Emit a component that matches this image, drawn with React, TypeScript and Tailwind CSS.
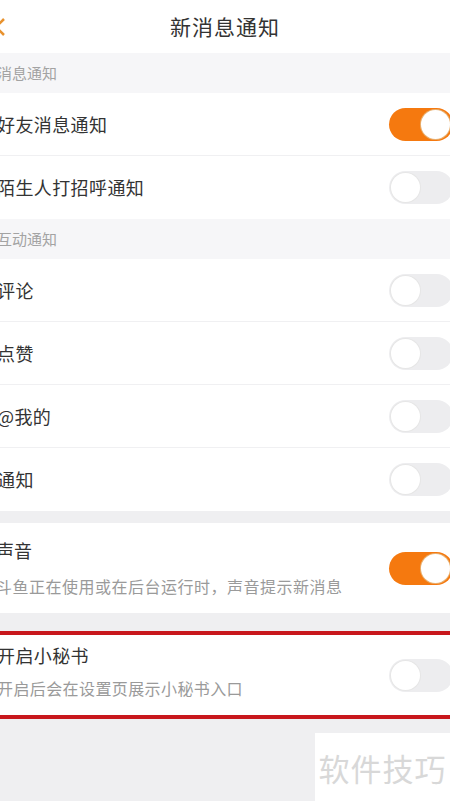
const font = { fontFamily: '"Noto Sans CJK SC", "Noto Sans", sans-serif' };

const Toggle = ({ on }: { on?: boolean }) => (
    <div
        className={`relative w-[64px] h-[33px] rounded-full shrink-0 -mr-[3px] ${on ? "bg-[#f5790f]" : "bg-[#ededef]"}`}
    >
        <div
            className={`absolute top-[2px] w-[29px] h-[29px] rounded-full bg-white ${on ? "right-[3px] shadow-[0_0_0_1px_#e8b070]" : "left-[2px] shadow-[0_0_0_1px_#e6e6e6]"}`}
        />
    </div>
);

const Section = ({ title }: { title: string }) => (
    <div className="h-[40px] bg-[#f6f6f8] flex items-center">
        <span className="-ml-[3px] text-[15px] text-[#a3a3a3]">{title}</span>
    </div>
);

const Row = ({ label, on, last }: { label: string; on?: boolean; last?: boolean }) => (
    <div className={`h-[63px] bg-white flex items-center justify-between ${last ? "" : "border-b border-[#f0f0f2]"}`}>
        <span className="-ml-[3px] text-[18px] text-[#333] tracking-[0.4px]">{label}</span>
        <Toggle on={on} />
    </div>
);

export default function App() {
    return (
        <div className="w-[450px] h-[801px] overflow-hidden bg-[#efeff1] flex flex-col" style={font}>
            <div className="h-[53px] bg-white flex items-center justify-center relative">
                <svg className="absolute -left-[6px] top-[17px]" width="12" height="20" viewBox="0 0 12 20">
                    <path d="M10 2 L2 10 L10 18" fill="none" stroke="#e8922e" strokeWidth="2.5" />
                </svg>
                <span className="text-[21px] text-[#333] tracking-[1px]">新消息通知</span>
            </div>
            <Section title="消息通知" />
            <Row label="好友消息通知" on />
            <Row label="陌生人打招呼通知" last />
            <Section title="互动通知" />
            <Row label="评论" />
            <Row label="点赞" />
            <Row label="@我的" />
            <Row label="通知" last />
            <div className="h-[12px]" />
            <div className="h-[90px] bg-white flex items-center justify-between">
                <div className="flex flex-col -ml-[4px] gap-[12px] -mt-[2px]">
                    <span className="text-[18px] text-[#333] leading-[25px]">声音</span>
                    <span className="text-[16px] text-[#9a9a9a] leading-[22px] tracking-[0.5px]">斗鱼正在使用或在后台运行时，声音提示新消息</span>
                </div>
                <Toggle on />
            </div>
            <div className="h-[18px]" />
            <div className="h-[88px] bg-white border-y-[4px] border-[#c8171c] flex items-center justify-between">
                <div className="flex flex-col -ml-[3px] gap-[9px] -mt-[8px]">
                    <span className="text-[18px] text-[#333] leading-[25px] tracking-[0.4px]">开启小秘书</span>
                    <span className="text-[16px] text-[#9a9a9a] leading-[22px] tracking-[0.4px]">开启后会在设置页展示小秘书入口</span>
                </div>
                <Toggle />
            </div>
            <div className="flex-1 flex justify-end pt-[14px]">
                <div className="w-[135px] bg-white flex items-start justify-center pt-[12px]">
                    <span className="text-[31px] text-[#d8d8d8] tracking-[1px]">软件技巧</span>
                </div>
            </div>
        </div>
    );
}
